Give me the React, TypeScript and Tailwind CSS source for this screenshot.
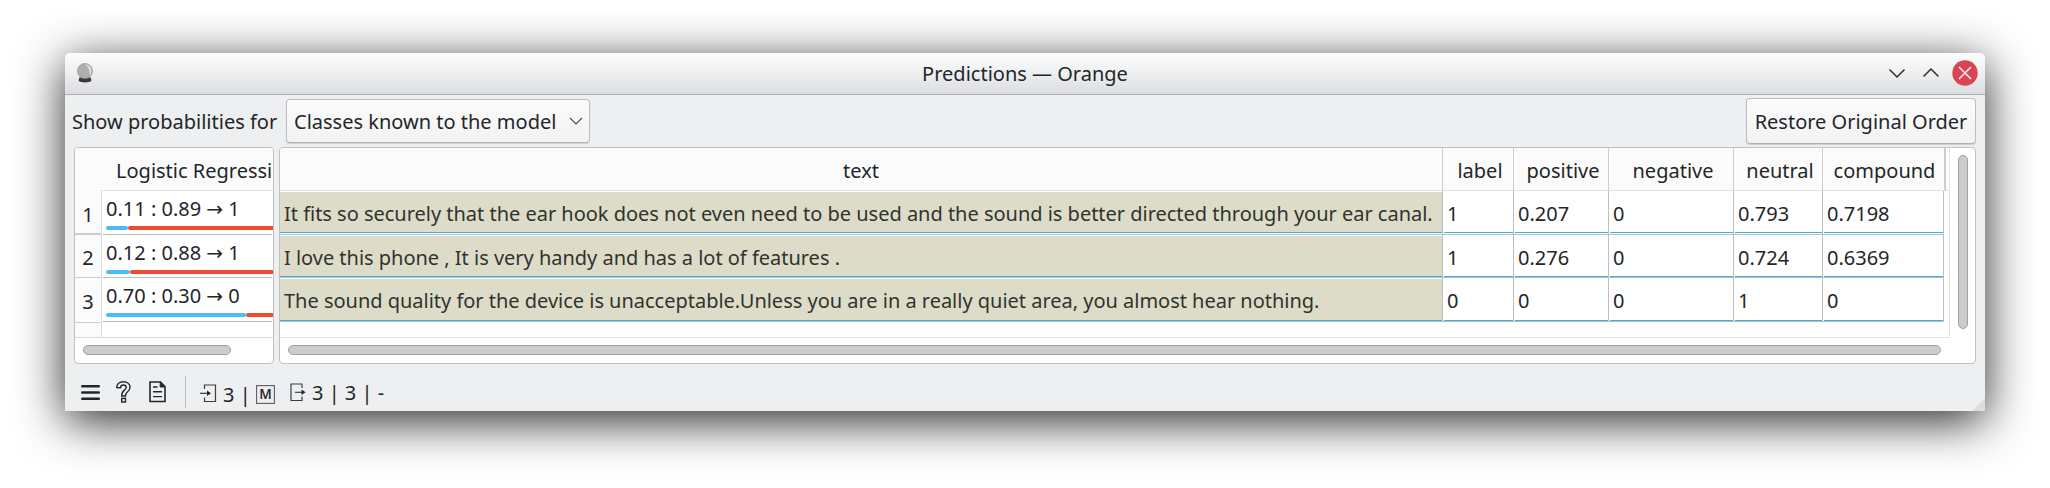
import type { ReactNode } from "react";

type Prediction = { scores: string; label: string; blue: string; red: string; height: string };

const predictions: Prediction[] = [
  { scores: "0.11 : 0.89", label: "1", blue: "w-[22px]", red: "w-[145px]", height: "h-11" },
  { scores: "0.12 : 0.88", label: "1", blue: "w-[24px]", red: "w-[143px]", height: "h-[43px]" },
  { scores: "0.70 : 0.30", label: "0", blue: "w-[140px]", red: "w-[27px]", height: "h-11" },
];

const rows = [
  {
    height: "h-11",
    pad: "pt-[1px] pb-[1px]",
    cells: [
      "It fits so securely that the ear hook does not even need to be used and the sound is better directed through your ear canal.",
      "1", "0.207", "0", "0.793", "0.7198",
    ],
  },
  {
    height: "h-[43px]",
    pad: "pt-[1px]",
    cells: ["I love this phone , It is very handy and has a lot of features .", "1", "0.276", "0", "0.724", "0.6369"],
  },
  {
    height: "h-11",
    pad: "pt-[1px]",
    cells: [
      "The sound quality for the device is unacceptable.Unless you are in a really quiet area, you almost hear nothing.",
      "0", "0", "0", "1", "0",
    ],
  },
];

const columns = ["text", "label", "positive", "negative", "neutral", "compound"];
const gridCols = "grid grid-cols-[1163px_71px_95px_125px_89px_121px] grid-rows-[100%]";

function TitleBar() {
  return (
    <div className="relative flex h-[42px] shrink-0 items-center justify-center rounded-t-[5px] border-b border-[#adafb1] bg-linear-to-b from-[#fdfdfd] via-[#eeeff0] to-[#dcdde0]">
      <svg className="absolute left-[12px] top-[10px]" width="16" height="20" viewBox="0 0 16 20">
        <path d="M2.2 14.5h11.6l.6 3.6c-2 1.8-10.800 1.800-12.800 0z" fill="#3a3a3a" />
        <circle cx="8" cy="8" r="7.600" fill="#aeaeae" stroke="#929292" strokeWidth=".6" />
        <path d="M8 1.200c4 .2 6.800 3.500 6.500 7-.2 2-.8 3.300-2 4.500.5-5-1-9-4.500-11.500z" fill="#dedede" />
      </svg>
      <span className="leading-[40px]">Predictions — Orange</span>
      <svg className="absolute right-[7px] top-[7px]" width="90" height="27" viewBox="0 0 90 27" fill="none">
        <path d="M1.500 9.500L9 17l7.500-7.500M35.500 16.500L43 9l7.500 7.500" stroke="#2b2e31" strokeWidth="1.500" />
        <circle cx="77" cy="13" r="12.700" fill="#da4453" />
        <path d="M71 7l12 12M83 7L71 19" stroke="#fcecee" strokeWidth="1.500" />
      </svg>
    </div>
  );
}

function Toolbar() {
  return (
    <div className="flex h-[52px] shrink-0 items-start">
      <span className="ml-[7px] mt-[5px] w-[214px] leading-[44px]">Show probabilities for</span>
      <button className="mt-[4px] flex h-[44px] w-[304px] items-center justify-between rounded-[4px] border border-[#bcbebf] border-b-[#b0b1b3] bg-linear-to-b from-[#fcfcfc] to-[#f2f2f3] pl-[7px] pr-[6px] shadow-[0_1px_1px_rgba(0,0,0,0.14)]">
        <span className="pt-[2px]">Classes known to the model</span>
        <svg width="14" height="9" viewBox="0 0 14 9" fill="none">
          <path d="M1 1l6 6 6-6" stroke="#4b4e51" strokeWidth="1.200" />
        </svg>
      </button>
      <button className="ml-auto mr-[9px] mt-[3px] h-[46px] w-[230px] rounded-[4px] border border-[#bcbebf] border-b-[#b0b1b3] bg-linear-to-b from-[#fcfcfc] to-[#f2f2f3] pt-[2px] shadow-[0_1px_1px_rgba(0,0,0,0.14)]">
        Restore Original Order
      </button>
    </div>
  );
}

function Panel({ className, children }: { className: string; children: ReactNode }) {
  return (
    <div className={`flex h-[217px] flex-col overflow-hidden rounded-[4px] border border-[#bfc1c2] bg-white ${className}`}>
      {children}
    </div>
  );
}

function PredictionPanel() {
  return (
    <Panel className="w-[200px]">
      <div className="flex h-[190px] shrink-0 border-b border-[#dcdcdd]">
        <div className="flex w-[26px] shrink-0 flex-col bg-[#fbfbfb] text-center">
          <div className="h-[43px]" />
          <div className="h-[44px] border-b-2 border-[#cccdce] pt-[2px] leading-[44px]">1</div>
          <div className="h-[43px] border-b border-[#cccdce] pt-[1px] leading-[44px]">2</div>
          <div className="h-[45px] border-b border-[#cccdce] pt-[2px] leading-[44px]">3</div>
        </div>
        <div className="w-[172px] overflow-hidden">
          <div className="h-[43px] border-b border-[#e0e0e1] bg-[#fbfbfb] pl-[15px] leading-[46px] whitespace-nowrap">
            Logistic Regressi
          </div>
          <div className="h-[146px] border-l border-[#dcdcdd] pl-[1px]">
            {predictions.map((p) => (
              <div key={p.scores} className={`${p.height} mr-[1px] border-b border-[#bcbebf] pl-[3px]`}>
                <div className="h-[35px] leading-[36px] whitespace-nowrap">
                  {p.scores} <span className="font-['DejaVu_Sans',sans-serif]">→</span> {p.label}
                </div>
                <div className="flex">
                  <div className={`h-[4px] shrink-0 rounded-full bg-[#4bbcf8] ${p.blue}`} />
                  <div className={`h-[4px] shrink-0 rounded-l-full bg-[#ec4a31] ${p.red}`} />
                </div>
              </div>
            ))}
          </div>
        </div>
      </div>
      <div className="ml-[8px] mt-[7px] h-[10px] w-[148px] rounded-full border border-[#a0a2a1] bg-[#cbcccb]" />
    </Panel>
  );
}

function TablePanel() {
  return (
    <Panel className="w-[1697px]">
      <div className="flex h-[190px] shrink-0">
        <div className="w-[1670px] shrink-0 rounded-br-[2px] border-r border-b border-[#e2e3e3]">
          <div className={`${gridCols} h-[43px] w-[1668px] border-b border-[#dfe0e0] bg-[#fbfbfb]`}>
            {columns.map((c, i) => (
              <div
                key={c}
                className={`border-[#cccdce] text-center leading-[46px] ${i === 5 ? "-mr-[2px] border-r-2 pl-[2px]" : "border-r"} ${i > 0 && i < 5 ? "pl-[4px]" : ""}`}
              >
                {c}
              </div>
            ))}
          </div>
          {rows.map((row) => (
            <div key={row.cells[0]} className={`${gridCols} ${row.height}`}>
              {row.cells.map((cell, i) => (
                <div key={i} className={`border-r border-b border-[#bcbebf] ${row.pad} ${i === 0 ? "" : "pl-[1px]"}`}>
                  <div
                    className={`h-full border-b border-[#3daee9] leading-[43px] whitespace-nowrap ${i === 0 ? "bg-[#dddcc8] pl-[4px] tracking-[-0.016px] text-[#31332f]" : "pl-[3px]"}`}
                  >
                    {cell}
                  </div>
                </div>
              ))}
            </div>
          ))}
        </div>
        <div className="ml-[8px] mt-[7px] h-[174px] w-[10px] rounded-full border border-[#a0a2a1] bg-[#cbcccb]" />
      </div>
      <div className="ml-[8px] mt-[7px] h-[10px] w-[1653px] rounded-full border border-[#a0a2a1] bg-[#cbcccb]" />
    </Panel>
  );
}

function StatusBar() {
  return (
    <div className="relative flex flex-1 items-start whitespace-pre">
      <svg className="ml-[16px] mt-[20px] shrink-0" width="19" height="17" viewBox="0 0 19 17">
        <path d="M1.200 2.200h16.600M1.200 8.500h16.600M1.200 14.800h16.600" stroke="#232629" strokeWidth="2.400" strokeLinecap="round" />
      </svg>
      <svg className="ml-[16px] mt-[17px] shrink-0" width="15" height="22" viewBox="0 0 15 22" fill="none" stroke="#232629" strokeWidth="1.400">
        <path d="M.8 6.500C.8 3 3.500.8 7.300.8s6.700 2.200 6.700 5.500c0 2.400-1.200 3.700-2.900 5-1.300 1-1.600 1.600-1.600 3.700H5.700c0-3 .6-4.200 2.500-5.600C9.600 8.300 10.200 7.500 10.200 6.300c0-1.400-1.100-2.300-2.800-2.300S4.600 5 4.500 6.800z" />
        <rect x="5.700" y="17.400" width="3.800" height="3.600" />
      </svg>
      <svg className="ml-[18px] mt-[17px] shrink-0" width="17" height="22" viewBox="0 0 17 22" fill="none" stroke="#232629" strokeWidth="1.600">
        <path d="M1 1h10.500L16 5.700V20.500H1z" />
        <path d="M11.200 1v5H16z" fill="#232629" strokeWidth="1" />
        <path d="M4 6h4.500M4 10.800h9M4 15.600h9" strokeWidth="1.400" />
      </svg>
      <div className="ml-[19px] mt-[12px] h-[32px] w-px shrink-0 bg-[#bdbfc0]" />
      <svg className="ml-[14px] mt-[20px] shrink-0" width="17" height="19" viewBox="0 0 17 19" fill="none" stroke="#3a3c3e" strokeWidth="1.200">
        <path d="M4.500 5V1H15.500V17.500H4.500V13.500" />
        <path d="M0 9.300h9" />
        <path d="M7 6.500l4 2.800-4 2.800z" fill="#232629" stroke="none" />
      </svg>
      <span className="ml-[6px] mt-[17px] w-[33px] shrink-0 leading-[28px]">3 |</span>
      <svg className="mt-[21px] shrink-0" width="19" height="19" viewBox="0 0 19 19">
        <rect x=".6" y=".6" width="17.800" height="17.800" fill="none" stroke="#5b5d5f" strokeWidth="1.100" />
        <text x="9.500" y="14.300" textAnchor="middle" fontSize="13.500" fontWeight="600" fill="#2b2d30">M</text>
      </svg>
      <svg className="ml-[15px] mt-[19px] shrink-0" width="17" height="19" viewBox="0 0 17 19" fill="none" stroke="#3a3c3e" strokeWidth="1.200">
        <path d="M12 5V1H1V17.500H12V13.500" />
        <path d="M5 9.300h9" />
        <path d="M11.500 6.500l4 2.800-4 2.800z" fill="#232629" stroke="none" />
      </svg>
      <span className="ml-[5px] mt-[15px] shrink-0 leading-[28px]">3 | 3 | -</span>
      <svg className="absolute right-0 bottom-0" width="13" height="13" viewBox="0 0 13 13">
        <path d="M13 0V13H0z" fill="#dcdde0" />
      </svg>
    </div>
  );
}

export default function App() {
  return (
    <div className="h-[488px] w-[2050px] overflow-hidden bg-white px-[65px] pt-[53px] font-['Noto_Sans',sans-serif] text-[20px] text-[#232629]">
      <div className="flex h-[358px] w-[1920px] flex-col rounded-t-[5px] bg-[#eeeff1] shadow-[0_10px_48px_rgba(0,0,0,0.85)]">
        <TitleBar />
        <Toolbar />
        <div className="ml-[9px] flex shrink-0 gap-[5px]">
          <PredictionPanel />
          <TablePanel />
        </div>
        <StatusBar />
      </div>
    </div>
  );
}
